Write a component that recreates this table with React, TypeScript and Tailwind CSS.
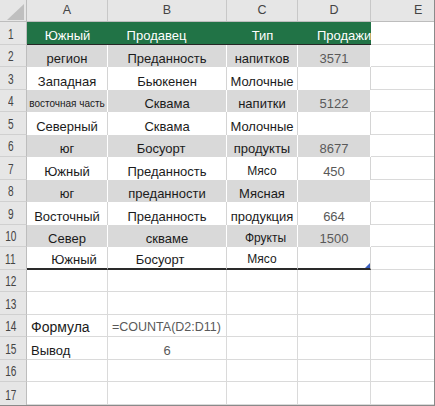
import React from 'react'

type DataRow = {
  a: string
  b: string
  c: string
  d?: string
  aCls?: string
  bCls?: string
  cCls?: string
}

// column widths (incl. right gridline)
const W = ['w-[27px]', 'w-[81px]', 'w-[119px]', 'w-[71px]', 'w-[73px]', 'w-[63px]']
const LETTERS = ['A', 'B', 'C', 'D']

const DATA: DataRow[] = [
  { a: 'регион', b: 'Преданность', c: 'напитков', d: '3571' },
  { a: 'Западная', b: 'Бьюкенен', c: 'Молочные' },
  { a: 'восточная часть', aCls: 'text-[10px]', b: 'Сквама', c: 'напитки', d: '5122' },
  { a: 'Северный', b: 'Сквама', c: 'Молочные' },
  { a: 'юг', b: 'Босуорт', bCls: 'pr-[12px]', c: 'продукты', d: '8677' },
  { a: 'Южный', b: 'Преданность', c: 'Мясо', cCls: 'text-[12px]', d: '450' },
  { a: 'юг', b: 'преданности', c: 'Мясная' },
  { a: 'Восточный', b: 'Преданность', c: 'продукция', d: '664' },
  { a: 'Север', b: 'скваме', c: 'Фрукты', cCls: 'text-[12px] pl-[7px]', d: '1500' },
  { a: 'Южный', aCls: 'pl-[14px]', b: 'Босуорт', bCls: 'pr-[14px]', c: 'Мясо', cCls: 'text-[12px]' },
]

const cellBase = 'flex shrink-0 items-end justify-center pb-[1px] leading-[15px] whitespace-nowrap overflow-hidden'

function RowHeader({ n, last }: { n: number; last?: boolean }) {
  return (
    <div
      className={`${W[0]} ${cellBase} pb-[2px] bg-[#e6e6e6] border-r border-[#bdbdbd] ${
        last ? '' : 'border-b border-b-[#d0d0d0]'
      } text-[14px] text-[#444] pr-[5px]`}
    >
      <span className="inline-block scale-x-[0.72]">{n}</span>
    </div>
  )
}

function EmptyCell({ w }: { w: string }) {
  return <div className={`${w} shrink-0 border-r border-b border-[#dadada]`} />
}

export default function App() {
  return (
    <div className="w-[435px] h-[406px] bg-white overflow-hidden border-r border-b border-[#8a8a8a] font-['Liberation_Sans',Arial,sans-serif] text-[13px] text-[#1b1b1b]">
      {/* Column headers */}
      <div className="flex h-[22px] bg-[#e6e6e6] border-b border-[#bdbdbd]">
        <div className={`${W[0]} relative shrink-0 border-r border-[#bdbdbd]`}>
          <svg className="absolute left-[7px] top-[4px]" width="17" height="16" viewBox="0 0 17 16">
            <polygon points="17,0 17,16 0,16" fill="#bfbfbf" />
          </svg>
        </div>
        {LETTERS.map((l, i) => (
          <div
            key={l}
            className={`${W[i + 1]} shrink-0 flex items-center justify-center border-r border-[#c8c8c8] text-[12.5px] text-[#444]`}
          >
            {l}
          </div>
        ))}
        <div className={`${W[5]} shrink-0 flex items-center pl-[43px] text-[12.5px] text-[#444]`}>E</div>
      </div>

      {/* Row 1: table header */}
      <div className="flex h-[23px]">
        <RowHeader n={1} />
        <div className={`${W[1]} ${cellBase} bg-[#217346] text-white border-b border-[#262626]`}>Южный</div>
        <div className={`${W[2]} ${cellBase} bg-[#217346] text-white border-b border-[#262626] pr-[22px]`}>Продавец</div>
        <div className={`${W[3]} ${cellBase} bg-[#217346] text-white border-b border-[#262626]`}>Тип</div>
        <div className={`${W[4]} ${cellBase} justify-start pl-[19px] bg-[#217346] text-white border-b border-[#262626]`}>
          Продажи
        </div>
        <div className={`${W[5]} shrink-0 border-b border-[#dadada]`} />
      </div>

      {/* Rows 2-11: table body */}
      {DATA.map((r, i) => {
        const n = i + 2
        const gray = n % 2 === 0
        const last = n === 11
        const h = n % 2 === 1 ? 'h-[23px]' : 'h-[22px]'
        const bg = gray ? 'bg-[#d9d9d9] border-r border-white' : 'bg-white border-r border-[#d4d4d4]'
        const bottom = last ? 'border-b-2 border-b-[#2a2a2a]' : ''
        return (
          <div key={n} className={`flex ${h}`}>
            <RowHeader n={n} />
            <div className={`${W[1]} ${cellBase} ${bg} ${bottom} ${r.aCls ?? ''}`}>{r.a}</div>
            <div className={`${W[2]} ${cellBase} ${bg} ${bottom} ${r.bCls ?? ''}`}>{r.b}</div>
            <div className={`${W[3]} ${cellBase} ${bg} ${bottom} ${r.cCls ?? ''}`}>{r.c}</div>
            <div className={`${W[4]} ${cellBase} relative ${bg} ${bottom} text-[#595959]`}>
              {r.d}
              {last && (
                <svg className="absolute right-0 bottom-0" width="5" height="5" viewBox="0 0 5 5">
                  <polygon points="5,0 5,5 0,5" fill="#3b5fc0" />
                </svg>
              )}
            </div>
            <div className={`${W[5]} shrink-0 border-b border-[#dadada]`} />
          </div>
        )
      })}

      {/* Rows 12-17 */}
      {[12, 13, 14, 15, 16, 17].map((n) => {
        const h = n % 2 === 1 ? 'h-[23px]' : 'h-[22px]'
        return (
          <div key={n} className={`flex ${h}`}>
            <RowHeader n={n} last={n === 17} />
            {n === 14 ? (
              <>
                <div className={`${W[1]} ${cellBase} justify-start pl-[4px] border-r border-b border-[#dadada] text-[14px]`}>
                  Формула
                </div>
                <div className={`${W[2]} ${cellBase} justify-start pl-[4px] border-r border-b border-[#dadada] text-[12.5px] text-[#595959]`}>
                  =COUNTA(D2:D11)
                </div>
              </>
            ) : n === 15 ? (
              <>
                <div className={`${W[1]} ${cellBase} justify-start pl-[4px] border-r border-b border-[#dadada]`}>Вывод</div>
                <div className={`${W[2]} ${cellBase} border-r border-b border-[#dadada] text-[#595959]`}>6</div>
              </>
            ) : (
              <>
                <EmptyCell w={W[1]} />
                <EmptyCell w={W[2]} />
              </>
            )}
            <EmptyCell w={W[3]} />
            <EmptyCell w={W[4]} />
            <div className={`${W[5]} shrink-0 border-b border-[#dadada]`} />
          </div>
        )
      })}
    </div>
  )
}
